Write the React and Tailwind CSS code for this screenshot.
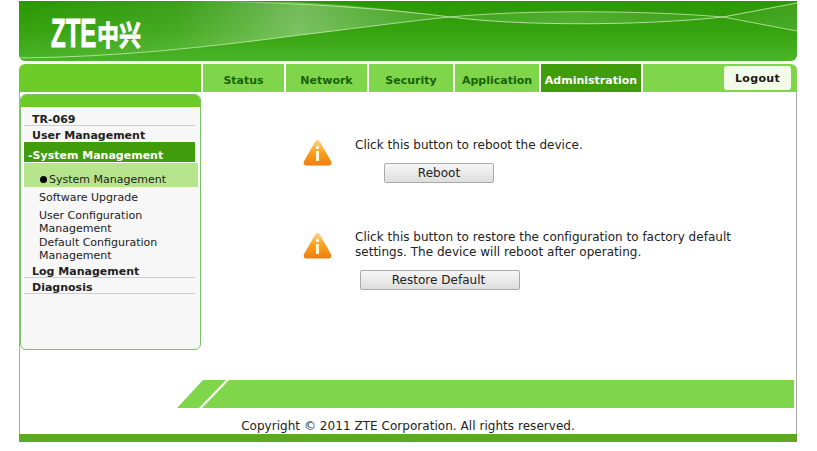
import React from 'react';

const font = { fontFamily: '"DejaVu Sans", Verdana, sans-serif' };

const tabs = [
  { label: 'Status', width: 'w-[81px]' },
  { label: 'Network', width: 'w-[81px]' },
  { label: 'Security', width: 'w-[84px]' },
  { label: 'Application', width: 'w-[84px]' },
];

const WarnIcon = ({ id }) => (
  <svg width="31" height="30" viewBox="0 0 30 30" preserveAspectRatio="none" className="shrink-0">
    <defs>
      <linearGradient id={id} x1="0" y1="0" x2="0" y2="1">
        <stop offset="0" stopColor="#fbd38a" />
        <stop offset="0.45" stopColor="#fba31f" />
        <stop offset="1" stopColor="#f07c10" />
      </linearGradient>
    </defs>
    <path d="M15 2 Q16.500 2 17.500 4 L28 23 Q29.500 27 26 27.500 L4 27.500 Q0.500 27 2 23 L12.500 4 Q13.500 2 15 2 Z" fill={`url(#${id})`} />
    <rect x="13.500" y="8" width="3" height="3" fill="#fff6d8" />
    <rect x="13.500" y="13" width="3" height="10" fill="#fff6d8" />
  </svg>
);

const HeaderArt = () => (
  <svg className="absolute inset-0 h-full w-full" viewBox="0 0 778 60" preserveAspectRatio="none">
    <defs>
      <linearGradient id="hdrbg" x1="0" y1="0" x2="0" y2="1">
        <stop offset="0" stopColor="#2b9607" />
        <stop offset="0.5" stopColor="#36a30f" />
        <stop offset="1" stopColor="#4ab528" />
      </linearGradient>
      <linearGradient id="hdrband" x1="0" y1="0" x2="1" y2="0">
        <stop offset="0" stopColor="#ffffff" stopOpacity="0" />
        <stop offset="0.2" stopColor="#ffffff" stopOpacity="0.08" />
        <stop offset="0.36" stopColor="#ffffff" stopOpacity="0.34" />
        <stop offset="0.55" stopColor="#ffffff" stopOpacity="0.08" />
        <stop offset="0.72" stopColor="#ffffff" stopOpacity="0.16" />
        <stop offset="0.9" stopColor="#ffffff" stopOpacity="0.04" />
        <stop offset="1" stopColor="#ffffff" stopOpacity="0.1" />
      </linearGradient>
      <linearGradient id="hdrline" x1="0" y1="0" x2="1" y2="0">
        <stop offset="0.2" stopColor="#d4f2c0" stopOpacity="0" />
        <stop offset="0.42" stopColor="#d4f2c0" stopOpacity="0.75" />
      </linearGradient>
    </defs>
    <rect width="778" height="60" fill="url(#hdrbg)" />
    <path d="M0 57 C100 56 190 46 281 34 C340 27 390 20 431 16 C500 9 620 9 704 16 L778 30 L778 2 L704 16 C620 25 500 25 431 16 C380 9 330 3 270 1 L50 0 L0 12 Z" fill="url(#hdrband)" />
    <path d="M0 57 C100 56 190 46 281 34 C340 27 390 20 431 16 C500 9 620 9 704 16 L778 30" fill="none" stroke="#d4f2c0" strokeOpacity="0.7" strokeWidth="1" />
    <path d="M0 0 L180 0 C290 2 370 8 431 16 C500 25 620 25 704 16 L778 2" fill="none" stroke="url(#hdrline)" strokeWidth="1" />
  </svg>
);

const App = () => {
  return (
    <div className="h-[451px] w-[817px] overflow-hidden bg-white pt-px pl-[19px]" style={font}>
      <div className="w-[778px]">
        <header className="relative flex h-[60px] items-center overflow-hidden rounded-b-md pt-[3px] pl-8">
          <HeaderArt />
          <div className="relative flex h-[30px] items-center text-white">
            <span className="w-[46px] origin-left scale-x-[0.6] text-[40px] font-bold leading-none [-webkit-text-stroke:1px_white] [font-family:'Liberation_Sans',sans-serif]">ZTE</span>
            <span className="scale-y-[1.3] text-[22px] font-bold leading-none [-webkit-text-stroke:0.6px_white] [font-family:'Noto_Sans_CJK_SC',sans-serif]">中兴</span>
          </div>
        </header>

        <nav className="mt-[3px] flex h-7 text-[11px] font-bold text-[#17620a]">
          <div className="w-[182px] rounded-tl-md bg-[#6ccb26]" />
          <div className="ml-0.5 flex gap-0.5">
            {tabs.map((t) => (
              <div key={t.label} className={`flex items-center justify-center bg-[#7fd64a] pt-1.5 ${t.width}`}>{t.label}</div>
            ))}
            <div className="flex w-[100px] items-center justify-center bg-[#409c0b] pt-1.5 text-white">Administration</div>
          </div>
          <div className="ml-0.5 flex flex-1 items-start justify-end rounded-tr-md bg-[#7fd64a] pt-0.5 pr-1.5">
            <button className="h-6 w-[67px] rounded-[3px] bg-[#f3fae8] pt-0.5 text-[11px] font-bold leading-5 tracking-[0.3px] text-[#1a1a1a]">Logout</button>
          </div>
        </nav>

        <div className="flex h-[342px] flex-col border-x border-[#a9a9a9]">
          <main className="flex h-[288px] shrink-0">
            <aside className="mt-0.5 flex h-[256px] w-[181px] shrink-0 flex-col overflow-hidden rounded-md border border-[#7cc064] bg-[#f7f7f7]">
              <div className="h-3 shrink-0 bg-[#6ccb26]" />
              <ul className="pt-[3px] pr-[5px] pl-[3px] text-[11px] text-[#222]">
                <li className="flex h-4 items-end border-b border-[#cfcfcf] pl-2 font-bold leading-none">TR-069</li>
                <li className="flex h-4 items-end pb-px pl-2 font-bold leading-none">User Management</li>
                <li className="flex h-5 items-center bg-[#409c0b] pt-1.5 pl-1 font-bold leading-none text-white">-System Management</li>
                <li className="mt-px flex h-6 w-[174px] items-end bg-[#b7e58e] pb-[2px] pl-4 leading-none">
                  <span className="mb-[2px] mr-[2px] size-[7px] rounded-full bg-black" />System Management
                </li>
                <li className="mt-1 pl-[15px] leading-[13px]">Software Upgrade</li>
                <li className="mt-[5px] pl-[15px] leading-[13px]">User Configuration<br />Management</li>
                <li className="mt-px pl-[15px] leading-[13px]">Default Configuration<br />Management</li>
                <li className="flex h-4 items-end border-b border-[#cfcfcf] pl-2 font-bold leading-none">Log Management</li>
                <li className="flex h-4 items-end border-b border-[#cfcfcf] pl-2 font-bold leading-none">Diagnosis</li>
              </ul>
            </aside>

            <section className="flex-1 text-[12px] leading-[15px] tracking-[0.02px] text-[#222]">
              <div className="mt-[45px] flex pl-[101px]">
                <div className="mt-px w-[53px]"><WarnIcon id="warn1" /></div>
                <div>
                  <p className="mt-px">Click this button to reboot the device.</p>
                  <button className="mt-[10px] ml-[29px] block h-5 w-[110px] rounded-[2px] border border-[#a9a9a9] bg-gradient-to-b from-[#f6f6f6] to-[#dedede] leading-none text-[#222]">Reboot</button>
                </div>
              </div>
              <div className="mt-[47px] flex pl-[101px]">
                <div className="mt-px w-[53px]"><WarnIcon id="warn2" /></div>
                <div>
                  <p className="leading-[15px]">Click this button to restore the configuration to factory default<br />settings. The device will reboot after operating.</p>
                  <button className="mt-[10px] ml-[5px] block h-5 w-40 rounded-[2px] border border-[#a9a9a9] bg-gradient-to-b from-[#f6f6f6] to-[#dedede] pr-[3px] leading-none text-[#222]">Restore Default</button>
                </div>
              </div>
            </section>
          </main>

          <div className="relative ml-[157px] mr-0.5 h-7 shrink-0 bg-[#7fd64a] [clip-path:polygon(26px_0,100%_0,100%_100%,0_100%)]">
            <div className="absolute inset-y-0 left-0 w-[52px] bg-white [clip-path:polygon(49px_0,52px_0,25px_100%,22px_100%)]" />
          </div>

          <div className="flex flex-1 items-end justify-center text-[12px] leading-[15px] tracking-[0.04px] text-[#222]">
            Copyright © 2011 ZTE Corporation. All rights reserved.
          </div>
        </div>
        <div className="h-2 bg-[#5aaa26]" />
      </div>
    </div>
  );
};

export default App;
